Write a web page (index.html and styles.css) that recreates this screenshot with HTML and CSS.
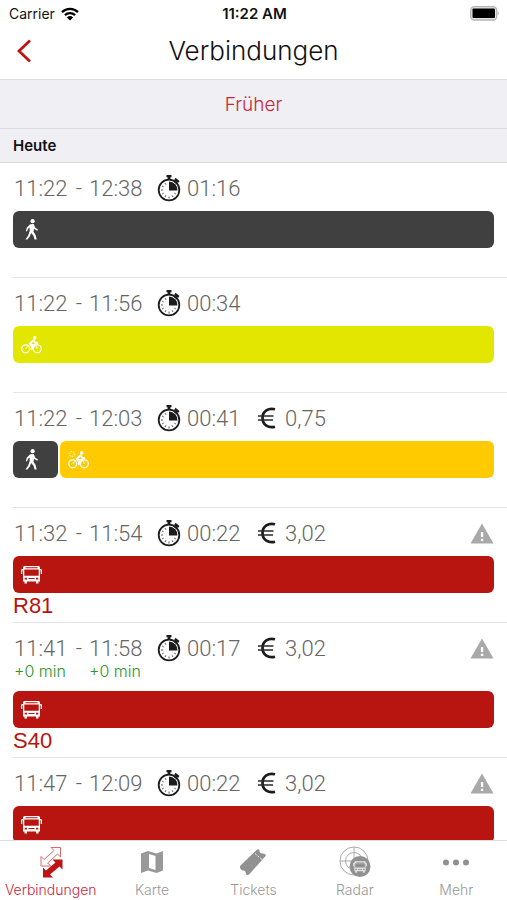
FILE: index.html
```html
<!DOCTYPE html>
<html lang="de">
<head>
<meta charset="utf-8">
<meta name="viewport" content="width=device-width, initial-scale=1">
<title>Verbindungen</title>
<link rel="stylesheet" href="styles.css">
</head>
<body>
<svg class="defs" aria-hidden="true">
  <symbol id="watch" viewBox="0 0 24 28">
    <circle cx="12" cy="16" r="10.3" fill="#fff" stroke="#1c1c1c" stroke-width="1.8"/>
    <path d="M9.500 1h5v2.200h-1.100V6h-2.800V3.200H9.500zM18.500 3.800l4 3.300-1.500 1.900-1-.8-1.200 1.500-1.800-1.500 1.200-1.500-1-.8z" fill="#1c1c1c"/>
    <path d="M12 16.500V7.500a8.500 8.500 0 0 1 8.500 9z" fill="#1c1c1c"/>
    <path d="M12 22.500v2M4 16H6M5.100 12l1.600.9M8 9.100l.9 1.600M5.100 20l1.600-.9M8 23l.9-1.700M16 23l-.9-1.700M18.900 20l-1.600-.9" stroke="#555" stroke-width="1"/>
  </symbol>
  <symbol id="euro" viewBox="0 0 18 22">
    <path d="M17 2.300C10.500.6 4.500 4 4.500 11s6 10.400 12.500 8.700" fill="none" stroke="#1c1c1c" stroke-width="2.700"/>
    <path d="M0 9h15.500M0 13h15" stroke="#2a2a2a" stroke-width="1.700"/>
  </symbol>
  <symbol id="walk" viewBox="0 0 14 21">
    <circle cx="7.600" cy="2.200" r="2.100" fill="#fff"/>
    <path d="M5.200 5.200L8.800 5l1.300 3.500 2.900 2-.8 1.200-3.200-1.900-.5 3 2.100 3.200 1.100 4.500H9.600L8.500 16.700 6.200 14 4.800 17.600 2.400 20.600H.5L3.300 16.300 4.700 12 4.600 8.600 3.100 9.700 2 12.600.8 12.100 1.900 8.600z" fill="#fff"/>
  </symbol>
  <symbol id="bike" viewBox="0 0 21 18">
    <g fill="none" stroke="#fff">
      <circle cx="4.700" cy="12.800" r="4" stroke-width="1.300"/>
      <circle cx="16.300" cy="12.800" r="4" stroke-width="1.300"/>
      <path d="M4.700 12.800L8.500 8.500l3.600 4.300 2.300-4.800 1.900 4.800M8.500 8.500h5.800" stroke-width="1"/>
      <path d="M12.600 4.200L9 7.600l3 2.200-1.500 4.200M12.800 4.500l1.800 2.700h2.600" stroke-width="2"/>
    </g>
    <circle cx="13.700" cy="1.900" r="1.800" fill="#fff"/>
  </symbol>
  <symbol id="bus" viewBox="0 0 21 18">
    <path fill-rule="evenodd" d="M3.500 0h14Q19 0 19 1.500V3h1.300l.7 1v4h-1.300V4.500H19V15.500H17.500V17.500H15V15.500H6V17.500H3.500V15.500H2V4.500H1.300V8H0V4L.7 3H2V1.500Q2 0 3.500 0zM4.500 1.200V2.200h12v-1zM3.300 3.500V9.800H17.700V3.500zM3.700 11.800V13.400H6V11.800zM7.500 12v1h6v-1zM15 11.800V13.400h2.300V11.800z" fill="#fff"/>
  </symbol>
  <symbol id="warn" viewBox="0 0 24 21">
    <path d="M12 .5L23.500 20.500H.5z" fill="#a9a9a9"/>
    <path d="M10.900 9h2.300v5h-2.300zM10.900 15.700h2.300v2.200h-2.300z" fill="#fff"/>
  </symbol>
</svg>
<div class="app">
  <div class="status">
    <span class="carrier">Carrier
      <svg width="18" height="14" viewBox="0 0 18 14" aria-hidden="true"><g fill="none" stroke="#000" stroke-width="2.300"><path d="M1 5.100a11.600 11.600 0 0 1 16 0"/><path d="M3.900 8.200a7.400 7.400 0 0 1 10.200 0"/></g><path d="M9 13.600L5.900 10.500a4.500 4.500 0 0 1 6.200 0z"/></svg>
    </span>
    <span class="clock">11:22 AM</span>
    <svg class="battery" width="30" height="15" viewBox="0 0 30 15" aria-hidden="true"><rect x=".7" y=".7" width="26" height="13.300" rx="3.500" fill="#e4e4e4" stroke="#b5b5b5" stroke-width="1.300"/><rect x="2.500" y="2.500" width="22.500" height="9.500" rx="1"/><path d="M27.700 4.800q2.200 2.400 0 4.800z" fill="#b5b5b5"/></svg>
  </div>
  <header class="nav">
    <button class="back" aria-label="Zurück"><svg width="16" height="24" viewBox="0 0 16 24"><path d="M14 1.500L3 12l11 10.500" fill="none" stroke="#be1414" stroke-width="2.800"/></svg></button>
    <h1>Verbindungen</h1>
  </header>
  <button class="earlier">Früher</button>
  <h2 class="day">Heute</h2>
  <main class="scroll">
    <ul class="trips">
      <li class="trip">
        <div class="facts"><span class="from"><span>11:22</span> <span>-</span></span><span>12:38</span><svg class="watch"><use href="#watch"/></svg><span>01:16</span></div>
        <div class="bar"><div class="leg walk"><svg width="14" height="21"><use href="#walk"/></svg></div></div>
        <div class="line"></div>
      </li>
      <li class="trip">
        <div class="facts"><span class="from"><span>11:22</span> <span>-</span></span><span>11:56</span><svg class="watch"><use href="#watch"/></svg><span>00:34</span></div>
        <div class="bar"><div class="leg bike"><svg width="21" height="18"><use href="#bike"/></svg></div></div>
        <div class="line"></div>
      </li>
      <li class="trip">
        <div class="facts"><span class="from"><span>11:22</span> <span>-</span></span><span>12:03</span><svg class="watch"><use href="#watch"/></svg><span>00:41</span><svg class="euro"><use href="#euro"/></svg><span>0,75</span></div>
        <div class="bar"><div class="leg walk short"><svg width="14" height="21"><use href="#walk"/></svg></div><div class="leg rental"><svg width="21" height="18" viewBox="0 0 21 18"><use href="#bike"/><circle cx="4" cy="3" r="2.500" fill="none" stroke="#ffec9e" stroke-width="1.500" stroke-dasharray="1.500 1"/></svg></div></div>
        <div class="line"></div>
      </li>
      <li class="trip">
        <div class="facts"><span class="from"><span>11:32</span> <span>-</span></span><span>11:54</span><svg class="watch"><use href="#watch"/></svg><span>00:22</span><svg class="euro"><use href="#euro"/></svg><span>3,02</span><svg class="warn"><use href="#warn"/></svg></div>
        <div class="bar"><div class="leg bus"><svg width="21" height="18"><use href="#bus"/></svg></div></div>
        <div class="line">R81</div>
      </li>
      <li class="trip">
        <div class="facts"><span class="from"><span>11:41</span> <span>-</span></span><span>11:58</span><svg class="watch"><use href="#watch"/></svg><span>00:17</span><svg class="euro"><use href="#euro"/></svg><span>3,02</span><svg class="warn"><use href="#warn"/></svg></div>
        <div class="delay"><span>+0 min</span><span>+0 min</span></div>
        <div class="bar"><div class="leg bus"><svg width="21" height="18"><use href="#bus"/></svg></div></div>
        <div class="line">S40</div>
      </li>
      <li class="trip">
        <div class="facts"><span class="from"><span>11:47</span> <span>-</span></span><span>12:09</span><svg class="watch"><use href="#watch"/></svg><span>00:22</span><svg class="euro"><use href="#euro"/></svg><span>3,02</span><svg class="warn"><use href="#warn"/></svg></div>
        <div class="bar"><div class="leg bus"><svg width="21" height="18"><use href="#bus"/></svg></div></div>
        <div class="line"></div>
      </li>
    </ul>
  </main>
  <nav class="tabs">
    <a href="#verbindungen" class="active"><svg width="32" height="32" viewBox="0 0 32 32"><path d="M16 1.500H25.500V11L22.500 8L12.700 17L15.500 20H6V10.500L9 13.500L19 4.500z" fill="#fff" stroke="#dc6a6a" stroke-width="1"/><path d="M17.500 13.500H27.500V23.500L24.500 20.500L15 28.500L18 31.500H8V21.500L11 24.500L20.500 16.500z" fill="#be1414"/></svg><span>Verbindungen</span></a>
    <a href="#karte"><svg width="32" height="32" viewBox="0 0 32 32"><path d="M5 7.500L12 5l8.500 2.500L27 5V24.500L20.500 27 12 24.500 5 27z" fill="#999"/><path d="M13 8l6.500 2V24L13 22z" fill="#fff"/></svg><span>Karte</span></a>
    <a href="#tickets"><svg width="32" height="32" viewBox="0 0 32 32"><path d="M3 20L19.500 4Q21 2.500 22.500 4q-.5 3.500 3 3.500 2.500-.5 3.500 2L12.500 28q-1.500 1.500-3.500.500 0-4.500-3.500-4-3-1-2.500-4.500z" fill="#919191"/><path d="M18 7.500l7.500 6.500" stroke="#fff" stroke-width="1" stroke-dasharray="2 1.500"/></svg><span>Tickets</span></a>
    <a href="#radar"><svg width="32" height="32" viewBox="0 0 32 32"><g fill="none" stroke="#aaa" stroke-width="1"><circle cx="15" cy="15" r="14"/><circle cx="15" cy="15" r="8.500"/><path d="M15 1v28M1 15h28"/></g><circle cx="21" cy="20.500" r="10.500" fill="#919191"/><use href="#bus" x="14" y="15" width="14" height="12" opacity=".75"/></svg><span>Radar</span></a>
    <a href="#mehr"><svg width="32" height="32" viewBox="0 0 32 32"><g fill="#919191"><circle cx="6" cy="16.500" r="3"/><circle cx="16" cy="16.500" r="3"/><circle cx="26" cy="16.500" r="3"/></g></svg><span>Mehr</span></a>
  </nav>
</div>
</body>
</html>
```
FILE: styles.css
```css
* { box-sizing: border-box; }
body {
  margin: 0;
  background: #fff;
  color: #111;
  font-family: Inter, "Liberation Sans", sans-serif;
  font-weight: 300;
}
button { border: 0; padding: 0; background: none; font: inherit; }
.defs { position: absolute; width: 0; height: 0; }
.app { display: flex; flex-direction: column; height: 100vh; overflow: hidden; }
.status {
  display: grid;
  grid-template-columns: 1fr auto 1fr;
  align-items: center;
  height: 27px;
  padding: 0 7px 0 9px;
  font-size: 14px;
  font-weight: 400;
}
.carrier { display: flex; align-items: center; gap: 6px; }
.clock { font-size: 15px; font-weight: 600; }
.battery { justify-self: end; }
.nav {
  display: grid;
  grid-template-columns: 48px 1fr 48px;
  align-items: center;
  height: 53px;
  padding-bottom: 5px;
  border-bottom: 1px solid #dcdce0;
}
.back { display: flex; align-items: center; height: 45px; padding-left: 16px; }
h1 { margin: 0; font-size: 26px; font-weight: 300; text-align: center; }
.earlier {
  flex: none;
  height: 49px;
  border-bottom: 1px solid #dcdce0;
  background: #efeff4;
  color: #c8283c;
  font-size: 19px;
}
.day {
  flex: none;
  margin: 0;
  padding-left: 13px;
  border-bottom: 1px solid #dcdce0;
  background: #efeff4;
  font-size: 15px;
  font-weight: 600;
  line-height: 33px;
}
.scroll { flex: 1; min-height: 0; overflow: hidden; }
.trips { margin: 0; padding: 0 0 0 13px; list-style: none; }
.trip { padding-top: 11px; border-bottom: 1px solid #e4e4e6; }
.facts, .delay {
  display: grid;
  grid-template-columns: 75px 68px 30px 71px 27px 1fr 24px;
  align-items: center;
  padding: 0 13px 0 1px;
}
.facts {
  height: 27px;
  color: #666;
  font-family: Roboto, "Liberation Sans", sans-serif;
  font-size: 22px;
}
.from { display: flex; justify-content: space-between; padding-right: 7px; }
.delay { height: 20px; color: #2e942e; font-size: 16px; }
.watch { width: 24px; height: 28px; }
.euro { width: 18px; height: 22px; }
.warn { width: 24px; height: 21px; }
.bar { display: flex; gap: 2px; margin: 10px 13px 0 0; }
.leg {
  display: flex;
  flex: 1;
  align-items: center;
  height: 37px;
  padding-left: 8px;
  border-radius: 6px;
}
.walk { padding-left: 12px; background: #404040; }
.short { flex: 0 0 45px; }
.bike { background: #e3e600; }
.rental { background: #ffcb00; }
.bus { background: #b81410; }
.line {
  height: 29px;
  color: #b81410;
  font-family: "Liberation Sans", sans-serif;
  font-size: 22px;
  line-height: 26px;
}
.tabs {
  display: grid;
  grid-template-columns: repeat(5, 1fr);
  height: 60px;
  border-top: 1px solid #dcdce0;
  background: #fff;
}
.tabs a {
  display: flex;
  flex-direction: column;
  align-items: center;
  gap: 2px;
  padding-top: 5px;
  color: #999;
  font-size: 14px;
  line-height: 20px;
  text-decoration: none;
}
.tabs .active { color: #c8283c; }
```
